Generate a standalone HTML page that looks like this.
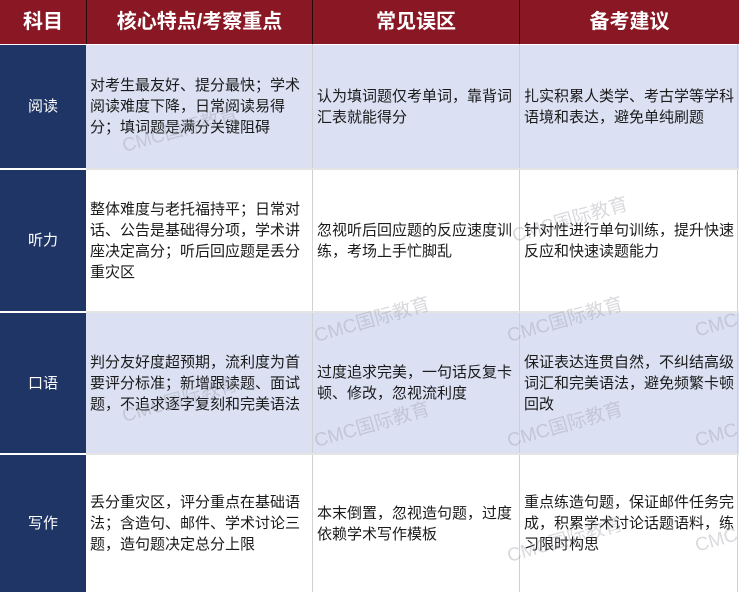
<!DOCTYPE html>
<html><head><meta charset="utf-8"><style>
body{margin:0;width:739px;height:592px;background:#fff;overflow:hidden;position:relative;font-family:"Liberation Sans","Noto Sans CJK SC",sans-serif}
.c{position:absolute;box-sizing:border-box;display:flex;align-items:center;font-size:15px;line-height:21px;color:#1a1a1a;padding:0 4px}
.h{background:#891824;color:#fff;font-weight:bold;font-size:20px;justify-content:center;top:0;height:44px;border-right:1px solid #2a0a0a}
.s{background:#1f3566;color:#fff;justify-content:center;left:0;width:86px;font-size:15px}
.l{background:#dbe1f3}
.w{position:absolute;color:rgba(150,150,160,.35);font-size:19px;transform:rotate(-16deg);white-space:nowrap;pointer-events:none}
.v{position:absolute;top:44px;bottom:0;width:1px;background:#d0d0d0}
</style></head><body>
<div class="c h" style="left:0;width:87px">科目</div>
<div class="c h" style="left:87px;width:226px">核心特点/考察重点</div>
<div class="c h" style="left:313px;width:207px">常见误区</div>
<div class="c h" style="left:520px;width:219px;border-right:none">备考建议</div>
<div style="position:absolute;left:0;top:44px;width:739px;height:1px;background:#fff"></div>

<div class="c s" style="top:45px;height:123px">阅读</div>
<div class="c l" style="left:86px;top:45px;width:227px;height:123px">对考生最友好、提分最快；学术阅读难度下降，日常阅读易得分；填词题是满分关键阻碍</div>
<div class="c l" style="left:313px;top:45px;width:207px;height:123px">认为填词题仅考单词，靠背词汇表就能得分</div>
<div class="c l" style="left:520px;top:45px;width:219px;height:123px">扎实积累人类学、考古学等学科语境和表达，避免单纯刷题</div>

<div class="c s" style="top:170px;height:141px">听力</div>
<div class="c" style="left:86px;top:170px;width:227px;height:141px">整体难度与老托福持平；日常对话、公告是基础得分项，学术讲座决定高分；听后回应题是丢分重灾区</div>
<div class="c" style="left:313px;top:170px;width:207px;height:141px">忽视听后回应题的反应速度训练，考场上手忙脚乱</div>
<div class="c" style="left:520px;top:170px;width:219px;height:141px">针对性进行单句训练，提升快速反应和快速读题能力</div>

<div class="c s" style="top:313px;height:140px">口语</div>
<div class="c l" style="left:86px;top:313px;width:227px;height:140px">判分友好度超预期，流利度为首要评分标准；新增跟读题、面试题，不追求逐字复刻和完美语法</div>
<div class="c l" style="left:313px;top:313px;width:207px;height:140px">过度追求完美，一句话反复卡顿、修改，忽视流利度</div>
<div class="c l" style="left:520px;top:313px;width:219px;height:140px">保证表达连贯自然，不纠结高级词汇和完美语法，避免频繁卡顿回改</div>

<div class="c s" style="top:455px;height:137px">写作</div>
<div class="c" style="left:86px;top:455px;width:227px;height:137px">丢分重灾区，评分重点在基础语法；含造句、邮件、学术讨论三题，造句题决定总分上限</div>
<div class="c" style="left:313px;top:455px;width:207px;height:137px">本末倒置，忽视造句题，过度依赖学术写作模板</div>
<div class="c" style="left:520px;top:455px;width:219px;height:137px">重点练造句题，保证邮件任务完成，积累学术讨论话题语料，练习限时构思</div>

<div class="v" style="left:312px"></div><div class="v" style="left:519px"></div><div class="v" style="left:737px"></div>
<div style="position:absolute;left:86px;top:168px;width:653px;height:2px;background:#e4e4e4"></div>
<div style="position:absolute;left:86px;top:311px;width:653px;height:2px;background:#e4e4e4"></div>
<div style="position:absolute;left:86px;top:453px;width:653px;height:2px;background:#e4e4e4"></div>

<div class="w" style="left:120px;top:115px">CMC国际教育</div>
<div class="w" style="left:510px;top:205px">CMC国际教育</div>
<div class="w" style="left:312px;top:305px">CMC国际教育</div>
<div class="w" style="left:505px;top:305px">CMC国际教育</div>
<div class="w" style="left:695px;top:315px">CMC</div>
<div class="w" style="left:312px;top:410px">CMC国际教育</div>
<div class="w" style="left:505px;top:410px">CMC国际教育</div>
<div class="w" style="left:695px;top:425px">CMC</div>
<div class="w" style="left:120px;top:385px">CMC国际教育</div>
<div class="w" style="left:505px;top:525px">CMC国际教育</div>
<div class="w" style="left:695px;top:530px">CMC</div>
</body></html>
